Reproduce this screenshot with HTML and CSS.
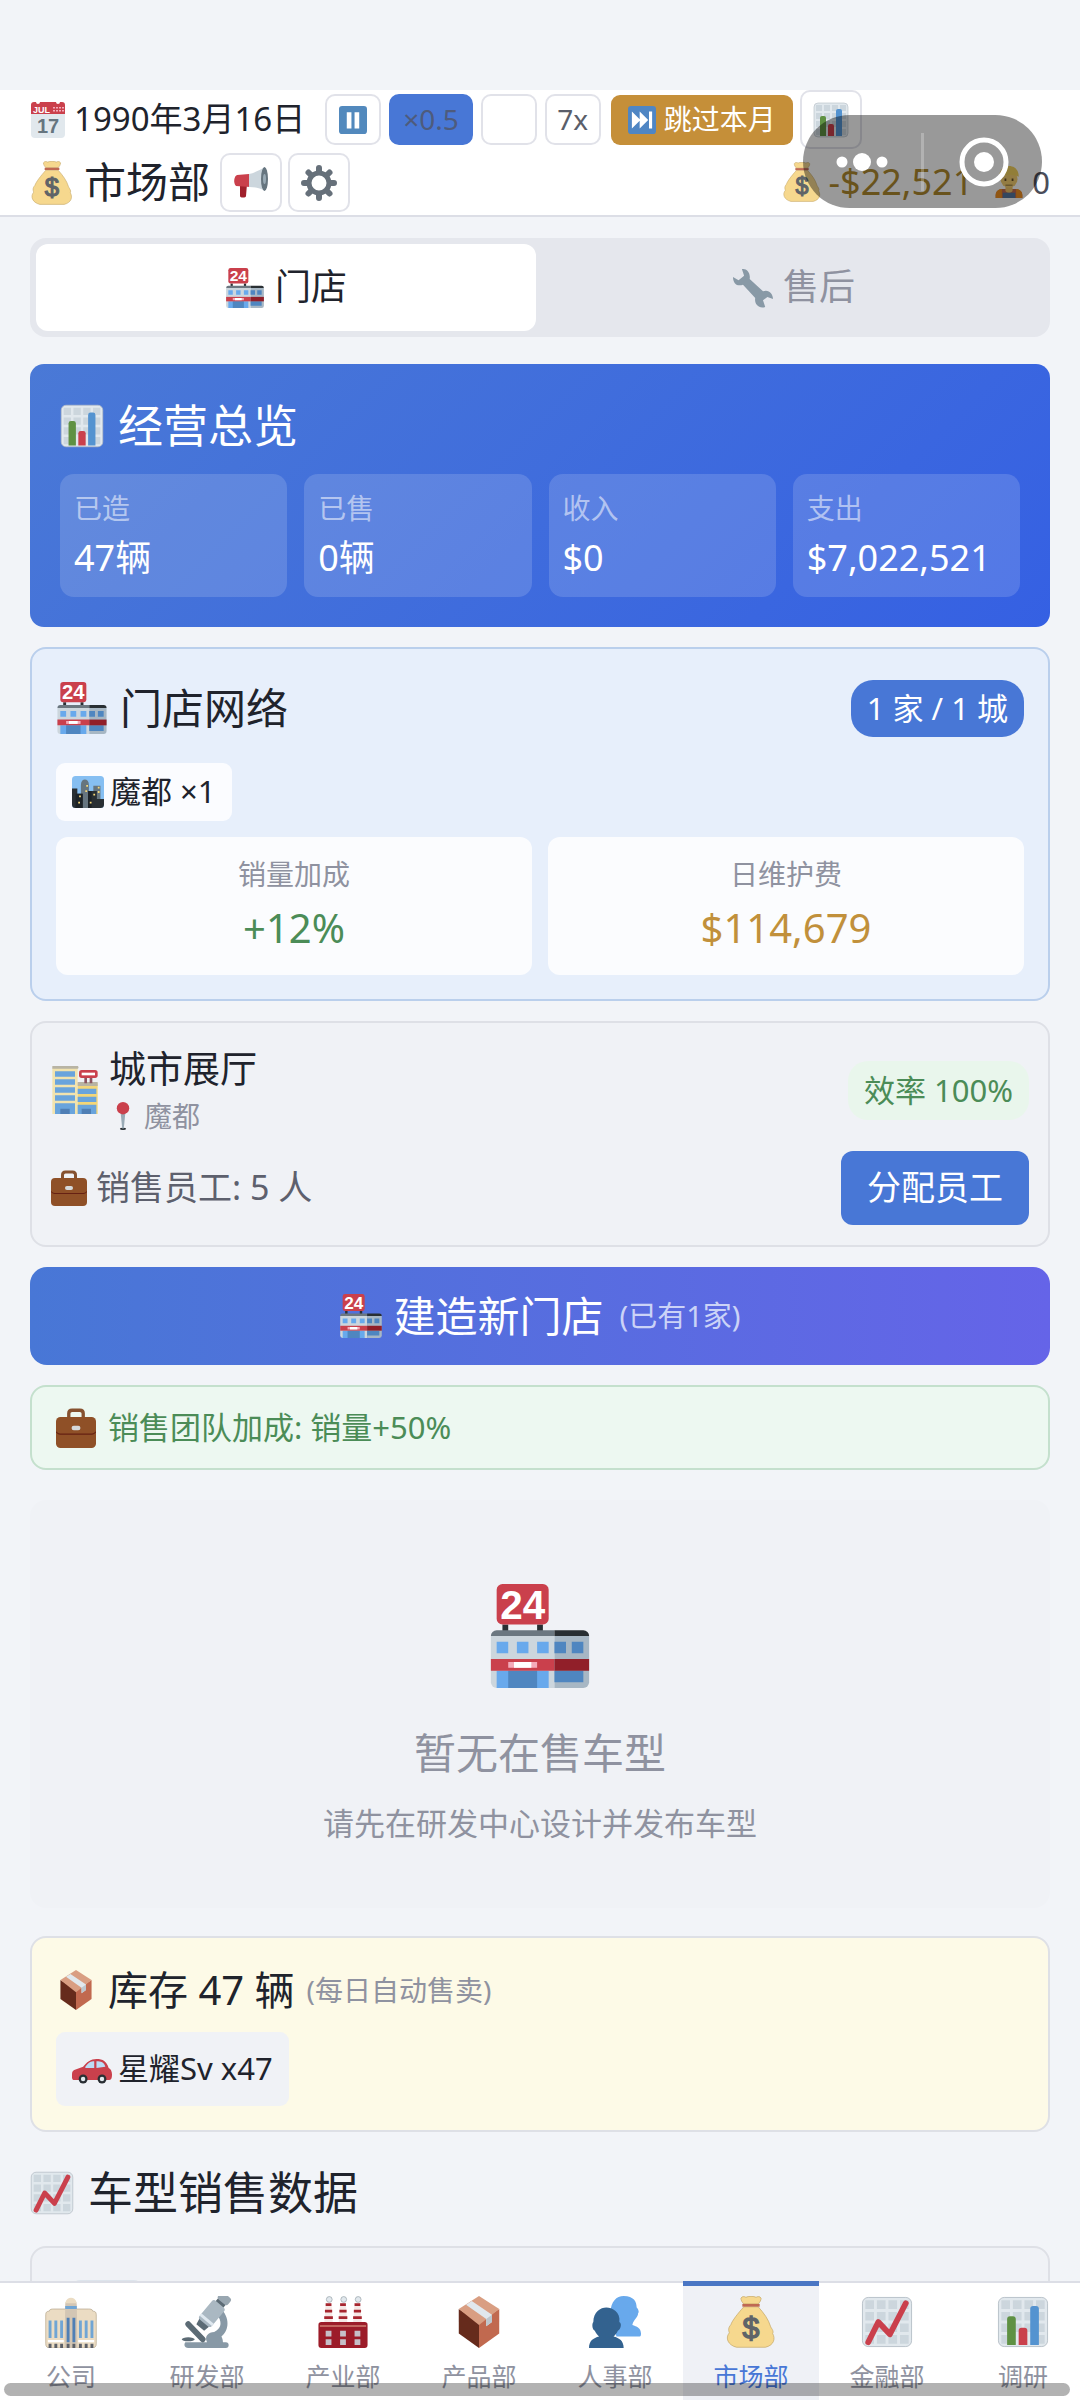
FILE: index.html
```html
<!DOCTYPE html>
<html lang="zh-CN">
<head>
    <meta charset="UTF-8">
    <meta name="viewport" content="width=device-width, initial-scale=1.0">
    <title>市场部</title>
    <link rel="stylesheet" href="styles.css">
</head>
<body>
    <!-- Icon set -->
    <svg class="sprite" aria-hidden="true">
        <symbol id="i-store" viewBox="0 0 36 36">
            <path fill="#292f33" d="M5 14h2v3H5zM17 14h2v3h-2z"/>
            <rect x="3" width="18" height="14" rx="2" fill="#ca404c"/>
            <path fill="#ccd6dd" d="M1 18h22v18H3a2 2 0 0 1-2-2z"/>
            <path fill="#a7b7c4" d="M23 18h12v16a2 2 0 0 1-2 2H23z"/>
            <path fill="#6b7780" d="M3 16h20v2H1a2 2 0 0 1 2-2z"/>
            <path fill="#292f33" d="M23 16h10a2 2 0 0 1 2 2H23z"/>
            <path fill="#68a9ec" d="M3 20h4v4H3zM10 20h4v4h-4zM17 20h4v4h-4zM3 30h18v6H3z"/>
            <path fill="#4f86c0" d="M23 20h4v4h-4zM29 20h4v4h-4zM7 30h10v6H7zM23 30h10v4H23z"/>
            <path fill="#ca404c" d="M1 26h22v4H1z"/>
            <path fill="#911f29" d="M23 26h12v4H23z"/>
            <path fill="#f4abba" d="M7 27h10v2H7z"/>
            <path fill="#fff" d="M9 27h6v2H9z"/>
            <text x="12" y="12" class="sign">24</text>
        </symbol>
        <symbol id="i-bars" viewBox="0 0 36 36">
            <rect x="1" y="1" width="34" height="34" rx="4" fill="#e1e8ed" stroke="#b3bcc4" stroke-width="0.6"/>
            <path fill="#ccd6dd" d="M3 3h6v6H3zM11 3h6v6h-6zM19 3h6v6h-6zM27 3h6v6h-6zM3 11h6v6H3zM11 11h6v6h-6zM19 11h6v6h-6zM27 11h6v6h-6zM3 19h6v6H3zM11 19h6v6h-6zM19 19h6v6h-6zM27 19h6v6h-6zM3 27h6v6H3zM27 27h6v6h-6z"/>
            <path fill="#5f9143" d="M7 34V16a2 2 0 0 1 2-2h2a2 2 0 0 1 2 2v18z"/>
            <path fill="#ca404c" d="M15 34V24a2 2 0 0 1 2-2h2a2 2 0 0 1 2 2v10z"/>
            <path fill="#5493d0" d="M23 34V9a2 2 0 0 1 2-2h2a2 2 0 0 1 2 2v25z"/>
        </symbol>
        <symbol id="i-trend" viewBox="0 0 36 36">
            <rect x="1" y="1" width="34" height="34" rx="4" fill="#e1e8ed" stroke="#b3bcc4" stroke-width="0.6"/>
            <path fill="#ccd6dd" d="M3 3h6v6H3zM11 3h6v6h-6zM19 3h6v6h-6zM27 3h6v6h-6zM3 11h6v6H3zM11 11h6v6h-6zM19 11h6v6h-6zM27 11h6v6h-6zM3 19h6v6H3zM11 19h6v6h-6zM19 19h6v6h-6zM27 19h6v6h-6zM3 27h6v6H3zM11 27h6v6h-6zM19 27h6v6h-6zM27 27h6v6h-6z"/>
            <path fill="none" stroke="#ca404c" stroke-width="4" stroke-linecap="round" stroke-linejoin="round" d="M5 32l7-14 8 8.500L31 5"/>
        </symbol>
        <symbol id="i-bag" viewBox="0 0 36 36">
            <path fill="#f6d88e" stroke="#c5a96b" stroke-width="0.5" d="M13 7.500C9 12 5 17 4 20c-2 2-1.500 4-1 5.500C0 29 2 34 8 35.500h20c6-1.500 7-6 5-9.500 1-2-1-3.500-1.500-5C30 16 27 12 23 7.500z"/>
            <path fill="#f6d88e" stroke="#c5a96b" stroke-width="0.5" d="M13 5.500c-1-1-2-2.500-2-4C12 0 13.500.3 14.500.9 16 0 20 0 21.500.9c1-.6 2.500-.9 3.500.6 0 1.500-1 3-2 4z"/>
            <path fill="#bf6952" d="M12 5.500h12v1.900H12z"/>
            <text x="18" y="29" class="dollar">$</text>
        </symbol>
        <symbol id="i-calendar" viewBox="0 0 36 36">
            <path fill="#e1e8ed" d="M1 10h34v22a4 4 0 0 1-4 4H5a4 4 0 0 1-4-4z"/>
            <path fill="#ca404c" d="M1 3a3 3 0 0 1 3-3h2a2 2 0 0 0 4 0h16a2 2 0 0 0 4 0h2a3 3 0 0 1 3 3v9H1z"/>
            <path fill="#f4abba" d="M23 5h2v1.500h-2zM26 5h2v1.500h-2zM29 5h2v1.500h-2zM32 5h2v1.500h-2zM23 8h2v1.500h-2zM26 8h2v1.500h-2zM29 8h2v1.500h-2zM32 8h2v1.500h-2z"/>
            <text x="3" y="11" class="cal-month">JUL</text>
            <text x="18" y="31" class="cal-day">17</text>
        </symbol>
        <symbol id="i-pause" viewBox="0 0 36 36">
            <rect width="36" height="36" rx="4" fill="#5289bd"/>
            <path fill="#fff" d="M10 8h6v21h-6zM20 8h6v21h-6z"/>
        </symbol>
        <symbol id="i-skip" viewBox="0 0 36 36">
            <rect width="36" height="36" rx="4" fill="#4f86c4"/>
            <path fill="#fff" d="M5 7l11 11L5 29zM15 7l11 11-11 11zM27 7h4v22h-4z"/>
        </symbol>
        <symbol id="i-horn" viewBox="0 0 36 36">
            <path fill="#a0202c" d="M7 19h7l-1 12c0 2-6 2-6 0z"/>
            <path fill="#ca404c" d="M16 9L4 10c-3 1-4 8-1 11l14 1z"/>
            <path fill="#ccd6dd" d="M16 9c5-1 11-4 16-7v24c-5-3-10-4-16-4z"/>
            <ellipse cx="31.500" cy="14" rx="3.500" ry="12" fill="#66757f"/>
            <ellipse cx="31.500" cy="14" rx="1.500" ry="5" fill="#99aab5"/>
        </symbol>
        <symbol id="i-gear" viewBox="0 0 36 36">
            <g fill="none" stroke="#66707a">
                <circle cx="18" cy="18" r="10" stroke-width="5"/>
                <path stroke-width="6" stroke-linecap="round" d="M18 3v3M18 30v3M3 18h3M30 18h3M7.500 7.500l2 2M26.500 26.500l2 2M28.500 7.500l-2 2M9.500 26.500l-2 2"/>
            </g>
        </symbol>
        <symbol id="i-wrench" viewBox="0 0 36 36">
            <path fill="#8899a6" d="M8 1c4-1 8 3 7 9l12 11c5-2 9 2 9 7l-5-2-4 3 2 6c-6 2-10-3-9-8L9 15c-5 2-9-1-9-7l5 3 5-4z"/>
        </symbol>
        <symbol id="i-worker" viewBox="0 0 36 36">
            <path fill="#c1694f" d="M3 36v-3c0-5 4-7 9-7h12c5 0 9 2 9 7v3z"/>
            <path fill="#f19020" d="M3 36v-3c0-5 4-7 7-7v10zM33 36v-3c0-5-4-7-7-7v10z"/>
            <path fill="#f0c46a" d="M14 22h8v6c-2 3-6 3-8 0z"/>
            <path fill="#55779f" d="M11 30h14v6H11z"/>
            <circle cx="18" cy="15" r="9.500" fill="#f5cf70"/>
            <path fill="#f4d35e" d="M7 12C7 4 12 0 18 0s11 4 11 12c-7-3-15-3-22 0z"/>
            <path fill="#664f2a" d="M13 14h2v3h-2zM21 14h2v3h-2zM14 21h8v1h-8z"/>
        </symbol>
        <symbol id="i-city" viewBox="0 0 36 36">
            <rect width="36" height="36" rx="4" fill="#86bff2"/>
            <path fill="#66757f" d="M10 36V10c0-8 9-8 9 0v26zM24 11h8v25h-8z"/>
            <path fill="#292f33" d="M0 14h6v6h6v16H4a4 4 0 0 1-4-4zM18 17h10v9h8v6a4 4 0 0 1-4 4H18z"/>
            <path fill="#1c2226" d="M4 20h8v16H4zM18 17h4v19h-4z"/>
            <path fill="#f6d878" d="M16 10h2v2h-2zM15 16h2v2h-2zM8 22h2v2H8zM7 29h2v2H7zM24 20h2v2h-2zM20 29h2v2h-2zM29 12h2v2h-2zM29 17h2v2h-2z"/>
        </symbol>
        <symbol id="i-mall" viewBox="0 0 36 36">
            <path fill="#f1e3ae" d="M1 1h19v35H1z"/>
            <path fill="#f3d678" d="M20 13h15v23H20z"/>
            <path fill="#b8b4a4" d="M1 0h18a1 1 0 0 1 1 2H1zM20 12h15v3H20z"/>
            <path fill="#69a4dc" d="M3 4h15v4H3zM3 10h15v4H3zM3 16h15v4H3zM3 22h15v4H3zM3 28h15v8H3zM20 17h14v4H20zM20 23h14v4H20zM20 29h14v7H20z"/>
            <path fill="#4f7fb5" d="M7 32h7v4H7zM23 32h7v4h-7z"/>
            <path fill="#8b5560" d="M25 9h2v4h-2zM29 9h2v4h-2z"/>
            <rect x="21" y="3" width="14" height="6" rx="2" fill="#ca404c"/>
            <path fill="#fff" d="M23 5h10v2H23z"/>
        </symbol>
        <symbol id="i-pin" viewBox="0 0 36 36">
            <ellipse cx="18" cy="34.500" rx="4" ry="1.500" fill="#292f33"/>
            <path fill="#99aab5" d="M15 14h6l-2 20h-2z"/>
            <circle cx="18" cy="8" r="8" fill="#ca404c"/>
        </symbol>
        <symbol id="i-case" viewBox="0 0 36 36">
            <path fill="none" stroke="#86512f" stroke-width="3" d="M11.500 8V5c0-2 1-3 3-3h7c2 0 3 1 3 3v3"/>
            <path fill="#8f5027" d="M0 12a4 4 0 0 1 4-4h28a4 4 0 0 1 4 4v20a4 4 0 0 1-4 4H4a4 4 0 0 1-4-4z"/>
            <path fill="#662113" d="M0 21c2 2 3 2 5 2h26c2 0 3 0 5-2v1c-2 2-3 2-5 2H5c-2 0-3 0-5-2z"/>
            <rect x="14" y="16" width="8" height="4" rx="2" fill="#d5d8da"/>
        </symbol>
        <symbol id="i-box" viewBox="0 0 36 36">
            <path fill="#662b1c" d="M4 9l14 9v18L4 26z"/>
            <path fill="#c1694f" d="M32 9l-14 9v18l14-10z"/>
            <path fill="#d99e82" d="M18 0L4 9l14 11L32 9z"/>
            <path fill="#e1e8ed" d="M13 3.500L9 6l14 10v5l4-3v-5z"/>
            <path fill="#bdc6cd" d="M23 16l4-3v5l-4 3z"/>
        </symbol>
        <symbol id="i-car" viewBox="0 0 36 36">
            <path fill="#ca404c" d="M2 19l8-3c3-4 7-7 12-7 6 0 9 2 11 8 2 1 3 3 3 6 0 4-1 5-3 5H2c-2 0-2-2-2-4s0-4 2-5z"/>
            <path fill="#bcdcf5" d="M12 16c3-4 5-5 8-5v6h-8zM22 11c4 0 7 1 8 5l-8 1z"/>
            <circle cx="10" cy="27" r="4" fill="#292f33"/><circle cx="27" cy="27" r="4" fill="#292f33"/>
            <circle cx="10" cy="27" r="2" fill="#e1e8ed"/><circle cx="27" cy="27" r="2" fill="#e1e8ed"/>
        </symbol>
        <symbol id="i-company" viewBox="0 0 36 36">
            <path fill="#ebdcc3" stroke="#b8a98e" stroke-width="0.5" d="M.5 13c0-2 1-2.500 2.500-2.500C3 9 5 9 6 9h24c1 0 3 0 3 1.500 1.500 0 2.500.5 2.500 2.500v20c0 2-1 3-3 3h-29c-2 0-3-1-3-3z"/>
            <path fill="#d3c6b4" d="M14 6c0-5 8-5 8 0l.5 30h-9z"/>
            <path fill="#ebdcc3" d="M14 5c1-5 7-5 8 0z"/>
            <path fill="#70a5d4" d="M2.500 17h2v12h-2zM6.500 17h2v12h-2zM10.500 17h2v12h-2zM23.500 17h2v12h-2zM27.500 17h2v12h-2zM31.500 17h2v12h-2zM14 7h8v2h-8z"/>
            <path fill="#4f7fb5" d="M15 15h2v17h-2zM19 15h2v17h-2z"/>
            <path fill="#fff" d="M2 30.500h11v1.500H2zM23 30.500h11v1.500H23z"/>
            <path fill="#5c6068" d="M2.500 33h2v3h-2zM6.500 33h2v3h-2zM10.500 33h2v3h-2zM15 33h2v3h-2zM19 33h2v3h-2zM23.500 33h2v3h-2zM27.500 33h2v3h-2zM31.500 33h2v3h-2z"/>
        </symbol>
        <symbol id="i-scope" viewBox="0 0 36 36">
            <path fill="#8899a6" d="M3 32h15c-2-4 1-7 5-7 6-3 5-8 2-12l3-4c7 8 4 16 0 19 1 2 1 3 1 4h2a2 2 0 0 1 0 4H5c-3 0-3-3-2-4z"/>
            <path stroke="#5c6b75" stroke-width="4" stroke-linecap="round" d="M5 19.500L15 30"/>
            <ellipse cx="5" cy="30" rx="4.500" ry="1.400" fill="#5c6b75"/>
            <g transform="rotate(40 20 13)">
                <path fill="#5c6b75" d="M17-1h7v5h-7zM16 19h9l-1 5h-7z"/>
                <rect x="15" y="3" width="11" height="17" rx="2" fill="#aab8c2"/>
                <path fill="#dfe8ef" d="M15 16h11v2H15z"/>
                <rect x="16" y="-5" width="9" height="6" rx="2" fill="#99a7b1"/>
            </g>
        </symbol>
        <symbol id="i-factory" viewBox="0 0 36 36">
            <path fill="#f5e8e6" d="M6 5h4l1 14H5zM16 5h4l1 14h-6zM26 5h4l1 14h-6z"/>
            <path fill="#a6262f" d="M6 5h4v2H6zM5.500 9.500h5v2h-5zM5 14h6v2H5zM16 5h4v2h-4zM15.500 9.500h5v2h-5zM15 14h6v2h-6zM26 5h4v2h-4zM25.500 9.500h5v2h-5zM25 14h6v2h-6z"/>
            <g fill="#e1e8ed" stroke="#99a4ac" stroke-width="0.5"><circle cx="8.500" cy="2.400" r="2"/><circle cx="18.500" cy="2.400" r="2"/><circle cx="28.500" cy="2.400" r="2"/></g>
            <rect x="1" y="18" width="34" height="18" rx="2" fill="#9c1c29"/>
            <path fill="#c4665f" d="M2 20h32v1.500H2z"/>
            <path fill="#c6bfc8" d="M6 24h4v4H6zM16 24h4v4h-4zM26 24h4v4h-4zM6 30h4v4H6zM16 30h4v4h-4zM26 30h4v4h-4z"/>
        </symbol>
        <symbol id="i-people" viewBox="0 0 36 36">
            <path fill="#68a9ec" d="M15 11C15 4 19 0 24 0c7 0 9 4 9 8 1 1 2 3 1 4 0 3-3 4-4 8 3 1 6 2 6 6 0 1 0 2-1 2H19z"/>
            <path fill="#33628f" d="M3 18c0-7 5-10 9-10s10 3 9 10c2 1 1 5-1 6-1 2-2 3-3 4 4 1 7 3 7 8H0c0-5 3-7 7-8-1-1-2-2-3-4-2-1-2-5-1-6z"/>
        </symbol>
    </svg>

    <div class="app">
        <header class="topbar">
            <div class="topbar-row">
                <svg class="icon icon-36"><use href="#i-calendar"/></svg>
                <span class="date">1990年3月16日</span>
                <div class="speed">
                    <button class="speed-btn" aria-label="暂停"><svg class="icon icon-28"><use href="#i-pause"/></svg></button>
                    <button class="speed-btn active">×0.5</button>
                    <button class="speed-btn" aria-label="速度"></button>
                    <button class="speed-btn">7x</button>
                </div>
                <button class="skip-btn"><svg class="icon icon-28"><use href="#i-skip"/></svg>跳过本月</button>
                <button class="square-btn" aria-label="报表"><svg class="icon icon-36"><use href="#i-bars"/></svg></button>
            </div>
            <div class="topbar-row">
                <svg class="icon icon-44"><use href="#i-bag"/></svg>
                <h1>市场部</h1>
                <button class="square-btn" aria-label="公告"><svg class="icon icon-36"><use href="#i-horn"/></svg></button>
                <button class="square-btn" aria-label="设置"><svg class="icon icon-36"><use href="#i-gear"/></svg></button>
                <div class="funds">
                    <svg class="icon icon-40"><use href="#i-bag"/></svg>
                    <span class="money">-$22,521</span>
                    <svg class="icon icon-32"><use href="#i-worker"/></svg>
                    <span>0</span>
                </div>
            </div>
            <!-- Floating menu, lies over the header -->
            <div class="capsule">
                <button aria-label="更多">
                    <svg width="52" height="20" viewBox="0 0 52 20" fill="#fff"><circle cx="6" cy="10" r="5.500"/><circle cx="26" cy="10" r="9"/><circle cx="46" cy="10" r="5.500"/></svg>
                </button>
                <button aria-label="关闭">
                    <svg width="52" height="52" viewBox="0 0 52 52"><circle cx="26" cy="26" r="22" fill="none" stroke="#fff" stroke-width="5"/><circle cx="26" cy="26" r="10" fill="#fff"/></svg>
                </button>
            </div>
        </header>

        <main class="content">
            <div class="tabs">
                <button class="tab active"><svg class="icon icon-40"><use href="#i-store"/></svg>门店</button>
                <button class="tab"><svg class="icon icon-40"><use href="#i-wrench"/></svg>售后</button>
            </div>

            <section class="overview">
                <h2><svg class="icon icon-44"><use href="#i-bars"/></svg>经营总览</h2>
                <div class="overview-grid">
                    <div class="overview-item"><span>已造</span><strong>47辆</strong></div>
                    <div class="overview-item"><span>已售</span><strong>0辆</strong></div>
                    <div class="overview-item"><span>收入</span><strong>$0</strong></div>
                    <div class="overview-item"><span>支出</span><strong>$7,022,521</strong></div>
                </div>
            </section>

            <section class="card network">
                <div class="network-head">
                    <h2><svg class="icon icon-52"><use href="#i-store"/></svg>门店网络</h2>
                    <span class="count">1 家 / 1 城</span>
                </div>
                <div class="chip chip-city"><svg class="icon icon-32"><use href="#i-city"/></svg>魔都 ×1</div>
                <div class="network-grid">
                    <div class="network-item"><span>销量加成</span><strong class="green">+12%</strong></div>
                    <div class="network-item"><span>日维护费</span><strong class="gold">$114,679</strong></div>
                </div>
            </section>

            <section class="card showroom">
                <div class="showroom-row">
                    <svg class="icon icon-48"><use href="#i-mall"/></svg>
                    <div class="showroom-name">
                        <h3>城市展厅</h3>
                        <p><svg class="icon icon-28"><use href="#i-pin"/></svg>魔都</p>
                    </div>
                    <span class="rate">效率 100%</span>
                </div>
                <div class="showroom-row">
                    <svg class="icon icon-36"><use href="#i-case"/></svg>
                    <span class="staff">销售员工: 5 人</span>
                    <button class="assign-btn">分配员工</button>
                </div>
            </section>

            <button class="build-btn"><svg class="icon icon-44"><use href="#i-store"/></svg>建造新门店<small>(已有1家)</small></button>

            <div class="card bonus"><svg class="icon icon-40"><use href="#i-case"/></svg>销售团队加成: 销量+50%</div>

            <section class="empty">
                <svg class="icon icon-104"><use href="#i-store"/></svg>
                <p class="empty-title">暂无在售车型</p>
                <p class="empty-hint">请先在研发中心设计并发布车型</p>
            </section>

            <section class="card stock">
                <h3><svg class="icon icon-40"><use href="#i-box"/></svg>库存 47 辆<small>(每日自动售卖)</small></h3>
                <div class="chip chip-car"><svg class="icon icon-40"><use href="#i-car"/></svg>星耀Sv x47</div>
            </section>

            <h2 class="section-title"><svg class="icon icon-44"><use href="#i-trend"/></svg>车型销售数据</h2>
            <section class="card sales"><div class="sales-tag"></div></section>
        </main>

        <nav class="bottom-nav">
            <a href="#"><svg class="icon icon-52"><use href="#i-company"/></svg>公司</a>
            <a href="#"><svg class="icon icon-52"><use href="#i-scope"/></svg>研发部</a>
            <a href="#"><svg class="icon icon-52"><use href="#i-factory"/></svg>产业部</a>
            <a href="#"><svg class="icon icon-52"><use href="#i-box"/></svg>产品部</a>
            <a href="#"><svg class="icon icon-52"><use href="#i-people"/></svg>人事部</a>
            <a href="#" class="active"><svg class="icon icon-52"><use href="#i-bag"/></svg>市场部</a>
            <a href="#"><svg class="icon icon-52"><use href="#i-trend"/></svg>金融部</a>
            <a href="#"><svg class="icon icon-52"><use href="#i-bars"/></svg>调研</a>
            <div class="nav-scroll"></div>
        </nav>
    </div>
</body>
</html>
```
FILE: styles.css
```css
* {
    box-sizing: border-box;
}

body {
    margin: 0;
    background-color: #f2f4f8;
    color: #20232c;
    font-family: "Noto Sans", "Noto Sans CJK SC", sans-serif;
    font-size: 31px;
    line-height: 1.4;
}

h1, h2, h3, p {
    margin: 0;
    font-weight: 400;
}

strong {
    font-weight: 400;
}

button {
    margin: 0;
    padding: 0;
    border: none;
    background: none;
    color: inherit;
    font: inherit;
    cursor: pointer;
}

/* Icons */
.sprite {
    display: none;
}

.icon { flex: none; display: block; }
.icon-28 { width: 28px; height: 28px; }
.icon-32 { width: 32px; height: 32px; }
.icon-36 { width: 36px; height: 36px; }
.icon-40 { width: 40px; height: 40px; }
.icon-44 { width: 44px; height: 44px; }
.icon-48 { width: 48px; height: 48px; }
.icon-52 { width: 52px; height: 52px; }
.icon-104 { width: 104px; height: 104px; }

.sign, .dollar, .cal-month, .cal-day {
    font-family: "Liberation Sans", sans-serif;
    font-weight: 700;
}

.sign {
    font-size: 14px;
    fill: #fff;
    text-anchor: middle;
}

.dollar {
    font-size: 21px;
    font-weight: 400;
    fill: #5f6468;
    stroke: #5f6468;
    text-anchor: middle;
}

.cal-month {
    font-size: 9px;
    fill: #fff;
}

.cal-day {
    font-size: 20px;
    fill: #66757f;
    text-anchor: middle;
}

.app {
    display: flex;
    flex-direction: column;
    height: 100vh;
    padding-top: 90px;
    overflow: hidden;
}

/* Header */
.topbar {
    position: relative;
    flex: none;
    display: flex;
    flex-direction: column;
    gap: 4px;
    padding: 0 30px 3px;
    background-color: #fff;
    border-bottom: 2px solid #dcdee6;
}

.topbar-row {
    display: flex;
    align-items: center;
    height: 59px;
}

.date {
    margin: 0 20px 0 8px;
    font-size: 33px;
}

.speed {
    display: flex;
    gap: 8px;
}

.speed-btn {
    display: flex;
    align-items: center;
    justify-content: center;
    min-width: 56px;
    height: 51px;
    border: 2px solid #e1e2e9;
    border-radius: 10px;
    color: #5a5e6a;
    font-size: 28px;
}

.speed-btn.active {
    padding: 0 12px;
    border-color: #4877d6;
    background-color: #4877d6;
    color: #4e5b7c;
}

.skip-btn {
    display: flex;
    align-items: center;
    gap: 8px;
    height: 50px;
    margin: 0 7px 0 10px;
    padding: 0 17px;
    border-radius: 9px;
    background-color: #c58f39;
    color: #fff;
    font-size: 28px;
}

.square-btn {
    display: flex;
    align-items: center;
    justify-content: center;
    width: 62px;
    height: 59px;
    border: 2px solid #e1e2e9;
    border-radius: 10px;
}

.topbar h1 {
    margin: 0 10px;
    font-size: 42px;
}

.square-btn + .square-btn {
    margin-left: 6px;
}

.funds {
    display: flex;
    align-items: center;
    margin-left: auto;
    color: #4a4d5a;
}

.money {
    margin: 0 20px 0 6px;
    color: #b08a30;
    font-size: 36px;
}

.funds .icon-32 {
    margin-right: 7px;
}

.capsule {
    position: absolute;
    top: 25px;
    right: 38px;
    display: grid;
    grid-template-columns: 118px 1fr;
    width: 239px;
    height: 93px;
    border-radius: 47px;
    background-color: rgba(0, 0, 0, 0.4);
}

.capsule button {
    display: flex;
    align-items: center;
    justify-content: center;
}

.capsule button + button {
    justify-content: flex-start;
}

.capsule button + button::before {
    content: "";
    width: 3px;
    height: 58px;
    margin-right: 34px;
    background-color: rgba(255, 255, 255, 0.25);
}

/* Main column */
.content {
    flex: 1;
    min-height: 0;
    padding: 21px 30px 0;
    overflow: hidden;
}

.card {
    margin-bottom: 20px;
    border: 2px solid #dee0e6;
    border-radius: 16px;
    background-color: #f0f2f6;
}

.tabs {
    display: flex;
    gap: 8px;
    margin-bottom: 27px;
    padding: 6px;
    border-radius: 16px;
    background-color: #e5e7ed;
}

.tab {
    flex: 1;
    display: flex;
    align-items: center;
    justify-content: center;
    gap: 10px;
    height: 87px;
    border-radius: 12px;
    color: #8f92a0;
    font-size: 36px;
}

.tab.active {
    background-color: #fff;
    color: #20232c;
}

.overview {
    margin-bottom: 20px;
    padding: 30px;
    border-radius: 14px;
    background: linear-gradient(135deg, #4a79d6, #3560e3);
    color: #fff;
}

.overview h2 {
    display: flex;
    align-items: center;
    gap: 14px;
    margin-bottom: 16px;
    font-size: 45px;
    line-height: 64px;
}

.overview-grid {
    display: grid;
    grid-template-columns: repeat(4, 1fr);
    gap: 17px;
}

.overview-item {
    display: flex;
    flex-direction: column;
    padding: 12px 14px;
    border-radius: 14px;
    background-color: rgba(255, 255, 255, 0.15);
}

.overview-item span {
    color: rgba(255, 255, 255, 0.55);
    font-size: 28px;
    line-height: 44px;
}

.overview-item strong {
    font-size: 36px;
    line-height: 55px;
}

.network {
    padding: 24px;
    border-color: #bacfec;
    background-color: #e7effb;
}

.network-head {
    display: flex;
    align-items: center;
    justify-content: space-between;
    height: 70px;
    margin-bottom: 20px;
}

.network h2 {
    display: flex;
    align-items: center;
    gap: 12px;
    font-size: 42px;
}

.count {
    padding: 0 16px;
    border-radius: 22px;
    background-color: #4877d6;
    color: #fff;
    line-height: 57px;
}

.chip {
    display: flex;
    align-items: center;
    gap: 6px;
    width: fit-content;
    padding: 0 16px;
    border-radius: 9px;
}

.chip-city {
    height: 58px;
    margin-bottom: 16px;
    background-color: #fbfcff;
}

.chip-car {
    height: 74px;
    background-color: #f0f2f6;
}

.network-grid {
    display: grid;
    grid-template-columns: 1fr 1fr;
    gap: 16px;
}

.network-item {
    display: flex;
    flex-direction: column;
    padding: 15px;
    border-radius: 12px;
    background-color: #fbfcfe;
    text-align: center;
}

.network-item span {
    color: #8f92a0;
    font-size: 28px;
    line-height: 44px;
}

.network-item strong {
    font-size: 40px;
    line-height: 64px;
}

.network-item .green { color: #4b8c57; }
.network-item .gold { color: #c1903b; }

.showroom {
    padding: 20px 19px;
}

.showroom-row {
    display: flex;
    align-items: center;
}

.showroom-row + .showroom-row {
    margin-top: 14px;
}

.showroom-name {
    margin-left: 10px;
}

.showroom-name h3 {
    font-size: 37px;
    line-height: 52px;
}

.showroom-name p {
    display: flex;
    align-items: center;
    gap: 7px;
    color: #8f92a0;
    font-size: 28px;
    line-height: 42px;
}

.rate {
    margin-left: auto;
    padding: 0 16px;
    border-radius: 20px;
    background-color: #e9f6ec;
    color: #4b8c57;
    line-height: 59px;
}

.staff {
    margin-left: 9px;
    color: #5d606d;
    font-size: 34px;
}

.assign-btn {
    height: 74px;
    margin-left: auto;
    padding: 0 26px;
    border-radius: 12px;
    background-color: #4877d6;
    color: #fff;
    font-size: 34px;
}

.build-btn {
    display: flex;
    align-items: center;
    justify-content: center;
    gap: 10px;
    width: 100%;
    height: 98px;
    margin-bottom: 20px;
    border-radius: 17px;
    background: linear-gradient(90deg, #4877d6, #6564e8);
    color: #fff;
    font-size: 42px;
}

.build-btn small {
    margin-left: 6px;
    color: #cbd3f7;
    font-size: 29px;
}

.bonus {
    display: flex;
    align-items: center;
    gap: 12px;
    height: 85px;
    margin-bottom: 30px;
    padding: 0 24px;
    border-color: #c4e0cd;
    background-color: #edf8f1;
    color: #4b8c57;
}

.empty {
    display: flex;
    flex-direction: column;
    align-items: center;
    margin-bottom: 28px;
    padding: 84px 30px 62px;
    border-radius: 16px;
    background-color: #f0f2f6;
    color: #8f92a0;
}

.empty-title {
    margin-top: 32px;
    font-size: 42px;
    line-height: 66px;
}

.empty-hint {
    margin-top: 14px;
    line-height: 46px;
}

.stock {
    padding: 24px;
    background-color: #fdfae7;
}

.stock h3 {
    display: flex;
    align-items: center;
    gap: 12px;
    margin-bottom: 14px;
    font-size: 40px;
    line-height: 56px;
}

.stock small {
    color: #8f92a0;
    font-size: 28px;
}

.section-title {
    display: flex;
    align-items: center;
    gap: 14px;
    margin: 28px 0 20px;
    font-size: 45px;
    line-height: 66px;
}

.sales {
    height: 300px;
    padding: 32px 40px;
}

.sales-tag {
    width: 70px;
    height: 50px;
    border-radius: 8px;
    background-color: #dde4ec;
}

/* Bottom navigation */
.bottom-nav {
    position: relative;
    flex: none;
    display: flex;
    height: 119px;
    padding-left: 3px;
    border-top: 2px solid #dcdee6;
    background-color: #fff;
}

.bottom-nav a {
    flex: none;
    display: flex;
    flex-direction: column;
    align-items: center;
    gap: 10px;
    width: 136px;
    padding-top: 13px;
    color: #8f92a0;
    font-size: 25px;
    line-height: 36px;
    text-decoration: none;
}

.bottom-nav a.active {
    margin-top: -2px;
    padding-top: 10px;
    border-top: 5px solid #4a76c4;
    background-color: #eff1f6;
    color: #4877d6;
}

.nav-scroll {
    position: absolute;
    right: 10px;
    bottom: 4px;
    left: 4px;
    height: 13px;
    border-radius: 7px;
    background-color: rgba(0, 0, 0, 0.3);
}
```
